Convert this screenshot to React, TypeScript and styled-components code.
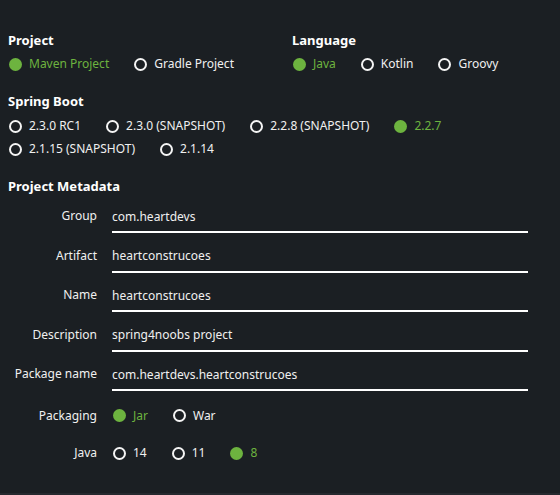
import React from "react";
import styled, { createGlobalStyle } from "styled-components";

const Global = createGlobalStyle`
  html, body { margin: 0; padding: 0; background: #1b1f23; }
  body { font-family: "Noto Sans", "Open Sans", sans-serif; color: #f0f0f0; }
  * { box-sizing: border-box; }
`;

const Page = styled.div`
  height: 493px;
  padding: 32px 32px 0 8px;
  display: flex;
  flex-direction: column;
  background: #1b1f23;
  overflow: hidden;
`;

const Strip = styled.div`
  height: 2px;
  background: #26292e;
`;

const TopGrid = styled.div`
  display: grid;
  grid-template-columns: 284px 1fr;
`;

const Section = styled.section<{ $mt?: number }>`
  display: flex;
  flex-direction: column;
  margin-top: ${(p) => p.$mt ?? 0}px;
`;

const Heading = styled.h2`
  margin: 0;
  font-size: 13px;
  line-height: 16px;
  font-weight: 700;
  color: #ffffff;
`;

const RadioRow = styled.div<{ $mt?: number }>`
  display: flex;
  flex-wrap: wrap;
  column-gap: 24px;
  row-gap: 7px;
  margin-top: ${(p) => p.$mt ?? 0}px;
`;

const Option = styled.label<{ $checked?: boolean }>`
  display: flex;
  align-items: center;
  gap: 7px;
  font-size: 12px;
  line-height: 16px;
  color: ${(p) => (p.$checked ? "#6db33f" : "#f0f0f0")};
  cursor: pointer;
  white-space: nowrap;
`;

const Dot = styled.span<{ $checked?: boolean }>`
  width: 13px;
  height: 13px;
  border-radius: 50%;
  flex: none;
  margin-left: 1px;
  background: ${(p) => (p.$checked ? "#6db33f" : "transparent")};
  border: ${(p) => (p.$checked ? "none" : "2px solid #f4f4f4")};
`;

const MetaGrid = styled.div`
  display: grid;
  grid-template-columns: 89px 1fr;
  column-gap: 15px;
  row-gap: 12.5px;
  margin-top: 12px;
  align-items: start;
`;

const Label = styled.div`
  text-align: right;
  font-size: 12px;
  line-height: 20px;
  color: #f0f0f0;
  white-space: nowrap;
`;

const RadioLabel = styled(Label)<{ $pt: number }>`
  line-height: 16px;
  padding-top: ${(p) => p.$pt}px;
`;

const Input = styled.input`
  display: block;
  width: 100%;
  height: 27px;
  padding: 0 0 5px 0;
  margin: 0;
  background: transparent;
  border: none;
  border-bottom: 2px solid #ffffff;
  outline: none;
  color: #f0f0f0;
  font-family: inherit;
  font-size: 12px;
  line-height: 20px;
`;

const MetaRadios = styled.div<{ $pt: number }>`
  display: flex;
  column-gap: 24px;
  padding-top: ${(p) => p.$pt}px;
`;

type Opt = { label: string; checked?: boolean };

const Radios = ({ options }: { options: Opt[] }) => (
  <>
    {options.map((o) => (
      <Option key={o.label} $checked={o.checked}>
        <Dot $checked={o.checked} />
        {o.label}
      </Option>
    ))}
  </>
);

const fields = [
  ["Group", "com.heartdevs"],
  ["Artifact", "heartconstrucoes"],
  ["Name", "heartconstrucoes"],
  ["Description", "spring4noobs project"],
  ["Package name", "com.heartdevs.heartconstrucoes"],
];

export default function App() {
  return (
    <>
      <Global />
      <Page>
        <TopGrid>
          <Section>
            <Heading>Project</Heading>
            <RadioRow $mt={8}>
              <Radios options={[{ label: "Maven Project", checked: true }, { label: "Gradle Project" }]} />
            </RadioRow>
          </Section>
          <Section>
            <Heading>Language</Heading>
            <RadioRow $mt={8}>
              <Radios options={[{ label: "Java", checked: true }, { label: "Kotlin" }, { label: "Groovy" }]} />
            </RadioRow>
          </Section>
        </TopGrid>
        <Section $mt={21}>
          <Heading>Spring Boot</Heading>
          <RadioRow $mt={9}>
            <Radios
              options={[
                { label: "2.3.0 RC1" },
                { label: "2.3.0 (SNAPSHOT)" },
                { label: "2.2.8 (SNAPSHOT)" },
                { label: "2.2.7", checked: true },
                { label: "2.1.15 (SNAPSHOT)" },
                { label: "2.1.14" },
              ]}
            />
          </RadioRow>
        </Section>
        <Section $mt={21}>
          <Heading>Project Metadata</Heading>
          <MetaGrid>
            {fields.map(([l, v]) => (
              <React.Fragment key={l}>
                <Label>{l}</Label>
                <Input defaultValue={v} />
              </React.Fragment>
            ))}
            <RadioLabel $pt={4}>Packaging</RadioLabel>
            <MetaRadios $pt={4}>
              <Radios options={[{ label: "Jar", checked: true }, { label: "War" }]} />
            </MetaRadios>
            <RadioLabel $pt={9}>Java</RadioLabel>
            <MetaRadios $pt={9}>
              <Radios options={[{ label: "14" }, { label: "11" }, { label: "8", checked: true }]} />
            </MetaRadios>
          </MetaGrid>
        </Section>
      </Page>
      <Strip />
    </>
  );
}
